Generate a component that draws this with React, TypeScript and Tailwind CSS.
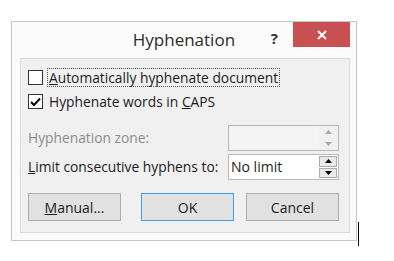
import React from "react";

const font = { fontFamily: '"Open Sans", "Noto Sans", sans-serif' };

function Spin({ value, disabled }: { value?: string; disabled?: boolean }) {
  const arrow = disabled ? "text-[#a8a8a8]" : "text-black";
  return (
    <div
      className={`flex h-[26px] w-[111px] border border-[#b9b9b9] p-[1px] ${
        disabled ? "bg-[#f0f0f0]" : "bg-white"
      }`}
    >
      <div
        className={`flex flex-1 items-center pl-[1px] text-[14px] leading-none ${
          disabled ? "bg-[#f4f4f4]" : "bg-white text-[#1c1c1c]"
        }`}
      >
        {value}
      </div>
      <div className="flex w-[18px] flex-col gap-[1px]">
        {[0, 1].map((i) => (
          <div
            key={i}
            className={`flex flex-1 items-center justify-center ${
              disabled ? "bg-[#f0f0f0]" : "border border-[#acacac] bg-[#e9e9e9]"
            }`}
          >
            <svg width="7" height="4" viewBox="0 0 7 4" className={arrow}>
              <path d={i === 0 ? "M0 4 L3.5 0 L7 4 Z" : "M0 0 L3.5 4 L7 0 Z"} fill="currentColor" />
            </svg>
          </div>
        ))}
      </div>
    </div>
  );
}

function Btn({ children, primary }: { children: React.ReactNode; primary?: boolean }) {
  return (
    <button
      className={`flex h-[28px] w-[93px] items-center justify-center border bg-[#e1e1e1] text-[14px] text-[#1c1c1c] ${
        primary ? "border-[#3c9ff0]" : "border-[#adadad]"
      }`}
    >
      {children}
    </button>
  );
}

export default function App() {
  return (
    <div className="h-[261px] w-[394px] bg-white" style={font}>
      <div className="flex items-start pl-[11px] pt-[21px]">
        <div className="flex h-[220px] w-[346px] flex-col border border-[#c6c6c6] bg-[#fbfbfb]">
          {/* title bar */}
          <div className="flex h-[36px] items-start">
            <div className="flex h-[36px] flex-1 items-center justify-center pl-[85px] text-[17px] text-[#2b2b2b]">
              Hyphenation
            </div>
            <div className="mr-[15px] mt-[9px] text-[15px] font-bold leading-none text-[#333]">?</div>
            <div className="mr-[6px] flex h-[25px] w-[57px] items-center justify-center bg-[#c75050]">
              <svg width="10" height="10" viewBox="0 0 10 10">
                <path d="M1 1 L9 9 M9 1 L1 9" stroke="white" strokeWidth="2" />
              </svg>
            </div>
          </div>

          {/* body panel */}
          <div className="ml-[8px] flex h-[175px] w-[330px] flex-col border border-[#dadada] bg-[#f0f0f0] text-[13.8px] text-[#1c1c1c]">
            <div className="mt-[9px] flex h-[19px] items-center pl-[7px]">
              <span className="h-[15px] w-[15px] border border-[#333] bg-white" />
              <span className="ml-[4px] border border-dotted border-[#555] px-[1px] leading-[17px]">
                <u>A</u>utomatically hyphenate document
              </span>
            </div>
            <div className="mt-[5px] flex h-[19px] items-center pl-[7px]">
              <span className="flex h-[15px] w-[15px] items-center justify-center border border-[#333] bg-white">
                <svg width="11" height="10" viewBox="0 0 11 10">
                  <path d="M1 5 L4 8 L10 1.5" stroke="black" strokeWidth="2" fill="none" />
                </svg>
              </span>
              <span className="ml-[5px] px-[1px] leading-[17px]">
                Hyphenate words in <u>C</u>APS
              </span>
            </div>
            <div className="mt-[14px] flex items-center pl-[7px]">
              <span className="w-[200px] text-[#8d8d8d]">Hyphenation zone:</span>
              <Spin disabled />
            </div>
            <div className="mt-[3px] flex items-center pl-[7px]">
              <span className="w-[200px]">
                <u>L</u>imit consecutive hyphens to:
              </span>
              <Spin value="No limit" />
            </div>
            <div className="mt-[13px] flex gap-[20px] pl-[7px]">
              <Btn>
                <span>
                  <u>M</u>anual...
                </span>
              </Btn>
              <Btn primary>OK</Btn>
              <div className="-ml-[8px]">
                <Btn>Cancel</Btn>
              </div>
            </div>
          </div>
        </div>
        <div className="ml-[1px] mt-[201px] h-[24px] w-[1px] bg-black" />
      </div>
    </div>
  );
}
